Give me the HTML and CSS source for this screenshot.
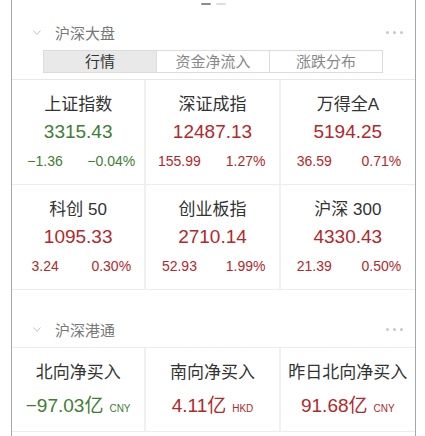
FILE: index.html
```html
<!DOCTYPE html>
<html>
<head>
  <title>Market Overview</title>
  <link rel="stylesheet" href="styles.css">
</head>
<body>
  <div class="panel">
    <div class="pager">
      <span class="dot active"></span>
      <span class="dot"></span>
    </div>

    <!-- 沪深大盘 -->
    <div class="section-head">
      <svg class="chevron" width="8" height="5" viewBox="0 0 8 5"><path d="M0.5 0.5 L4 4.5 L7.5 0.5" fill="none" stroke="#c2c2c2" stroke-width="1"/></svg>
      <span class="section-title">沪深大盘</span>
      <span class="more"><i></i><i></i><i></i></span>
    </div>
    <div class="tabs-wrap">
      <div class="tabs">
        <div class="tab active">行情</div>
        <div class="tab">资金净流入</div>
        <div class="tab">涨跌分布</div>
      </div>
    </div>
    <div class="grid">
      <div class="cell">
        <div class="name">上证指数</div>
        <div class="value down">3315.43</div>
        <div class="change down"><span>−1.36</span><span>−0.04%</span></div>
      </div>
      <div class="cell">
        <div class="name">深证成指</div>
        <div class="value up">12487.13</div>
        <div class="change up"><span>155.99</span><span>1.27%</span></div>
      </div>
      <div class="cell">
        <div class="name">万得全A</div>
        <div class="value up">5194.25</div>
        <div class="change up"><span>36.59</span><span>0.71%</span></div>
      </div>
      <div class="cell">
        <div class="name">科创 50</div>
        <div class="value up">1095.33</div>
        <div class="change up"><span>3.24</span><span>0.30%</span></div>
      </div>
      <div class="cell">
        <div class="name">创业板指</div>
        <div class="value up">2710.14</div>
        <div class="change up"><span>52.93</span><span>1.99%</span></div>
      </div>
      <div class="cell">
        <div class="name">沪深 300</div>
        <div class="value up">4330.43</div>
        <div class="change up"><span>21.39</span><span>0.50%</span></div>
      </div>
    </div>

    <!-- 沪深港通 -->
    <div class="section-head second">
      <svg class="chevron" width="8" height="5" viewBox="0 0 8 5"><path d="M0.5 0.5 L4 4.5 L7.5 0.5" fill="none" stroke="#c2c2c2" stroke-width="1"/></svg>
      <span class="section-title">沪深港通</span>
      <span class="more"><i></i><i></i><i></i></span>
    </div>
    <div class="grid flow">
      <div class="cell">
        <div class="name">北向净买入</div>
        <div class="value down">−97.03亿<small>CNY</small></div>
      </div>
      <div class="cell">
        <div class="name">南向净买入</div>
        <div class="value up">4.11亿<small>HKD</small></div>
      </div>
      <div class="cell">
        <div class="name">昨日北向净买入</div>
        <div class="value up">91.68亿<small>CNY</small></div>
      </div>
    </div>
  </div>
</body>
</html>
```

FILE: styles.css
```css
body {
  margin: 0;
  background-color: #fff;
  font-family: "Liberation Sans", "Noto Sans CJK SC", sans-serif;
  color: #333;
}

.panel {
  margin-left: 11px;
  width: 403px;
  min-height: 436px;
  border-left: 1px solid #a6a6a6;
  border-right: 1px solid #a6a6a6;
}

/* page indicator */
.pager {
  height: 14px;
  display: flex;
  justify-content: center;
  gap: 5px;
  padding-top: 3px;
  box-sizing: border-box;
}

.dot {
  width: 10px;
  height: 2px;
  border-radius: 1px;
  background-color: #dedede;
}

.dot.active {
  background-color: #8c8c8c;
}

/* section header */
.section-head {
  height: 36px;
  display: flex;
  align-items: center;
  padding: 0 12px 0 21px;
}

.section-head.second {
  margin-top: 21px;
}

.chevron {
  margin-right: 14px;
}

.section-title {
  flex: 1;
  font-size: 15px;
  color: #777;
}

.more {
  display: flex;
  gap: 4px;
}

.more i {
  width: 3px;
  height: 3px;
  border-radius: 50%;
  background-color: #c8c8c8;
}

/* tabs */
.tabs-wrap {
  padding: 0 32px 6px 31px;
  border-bottom: 1px solid #e8e8e8;
}

.tabs {
  display: flex;
  border: 1px solid #dcdcdc;
  height: 21px;
}

.tab {
  flex: 1;
  text-align: center;
  font-size: 15px;
  line-height: 21px;
  color: #888;
  border-left: 1px solid #dcdcdc;
}

.tab:first-child {
  border-left: none;
}

.tab.active {
  background-color: #e9e9e9;
  color: #333;
}

/* index grid */
.grid {
  display: grid;
  grid-template-columns: 1fr 1fr 1fr;
}

.grid.flow {
  border-top: 1px solid #ececec;
}

.cell {
  padding: 13px 0;
  text-align: center;
  border-bottom: 1px solid #ececec;
  border-right: 2px solid #f0f0f0;
}

.cell:nth-child(3n) {
  border-right: none;
}

.name {
  font-size: 17px;
  line-height: 24px;
  color: #333;
}

.value {
  font-size: 19px;
  line-height: 30px;
}

.change {
  display: flex;
  margin-top: 4px;
  font-size: 14px;
  line-height: 20px;
}

.change span {
  flex: 1;
}

.up {
  color: #b2282b;
}

.down {
  color: #3e7d33;
}

.flow .cell {
  padding: 13px 0 8px;
}

.flow .value {
  margin-top: 7px;
  line-height: 28px;
}

.value small {
  font-size: 10px;
  margin-left: 6px;
}
```
